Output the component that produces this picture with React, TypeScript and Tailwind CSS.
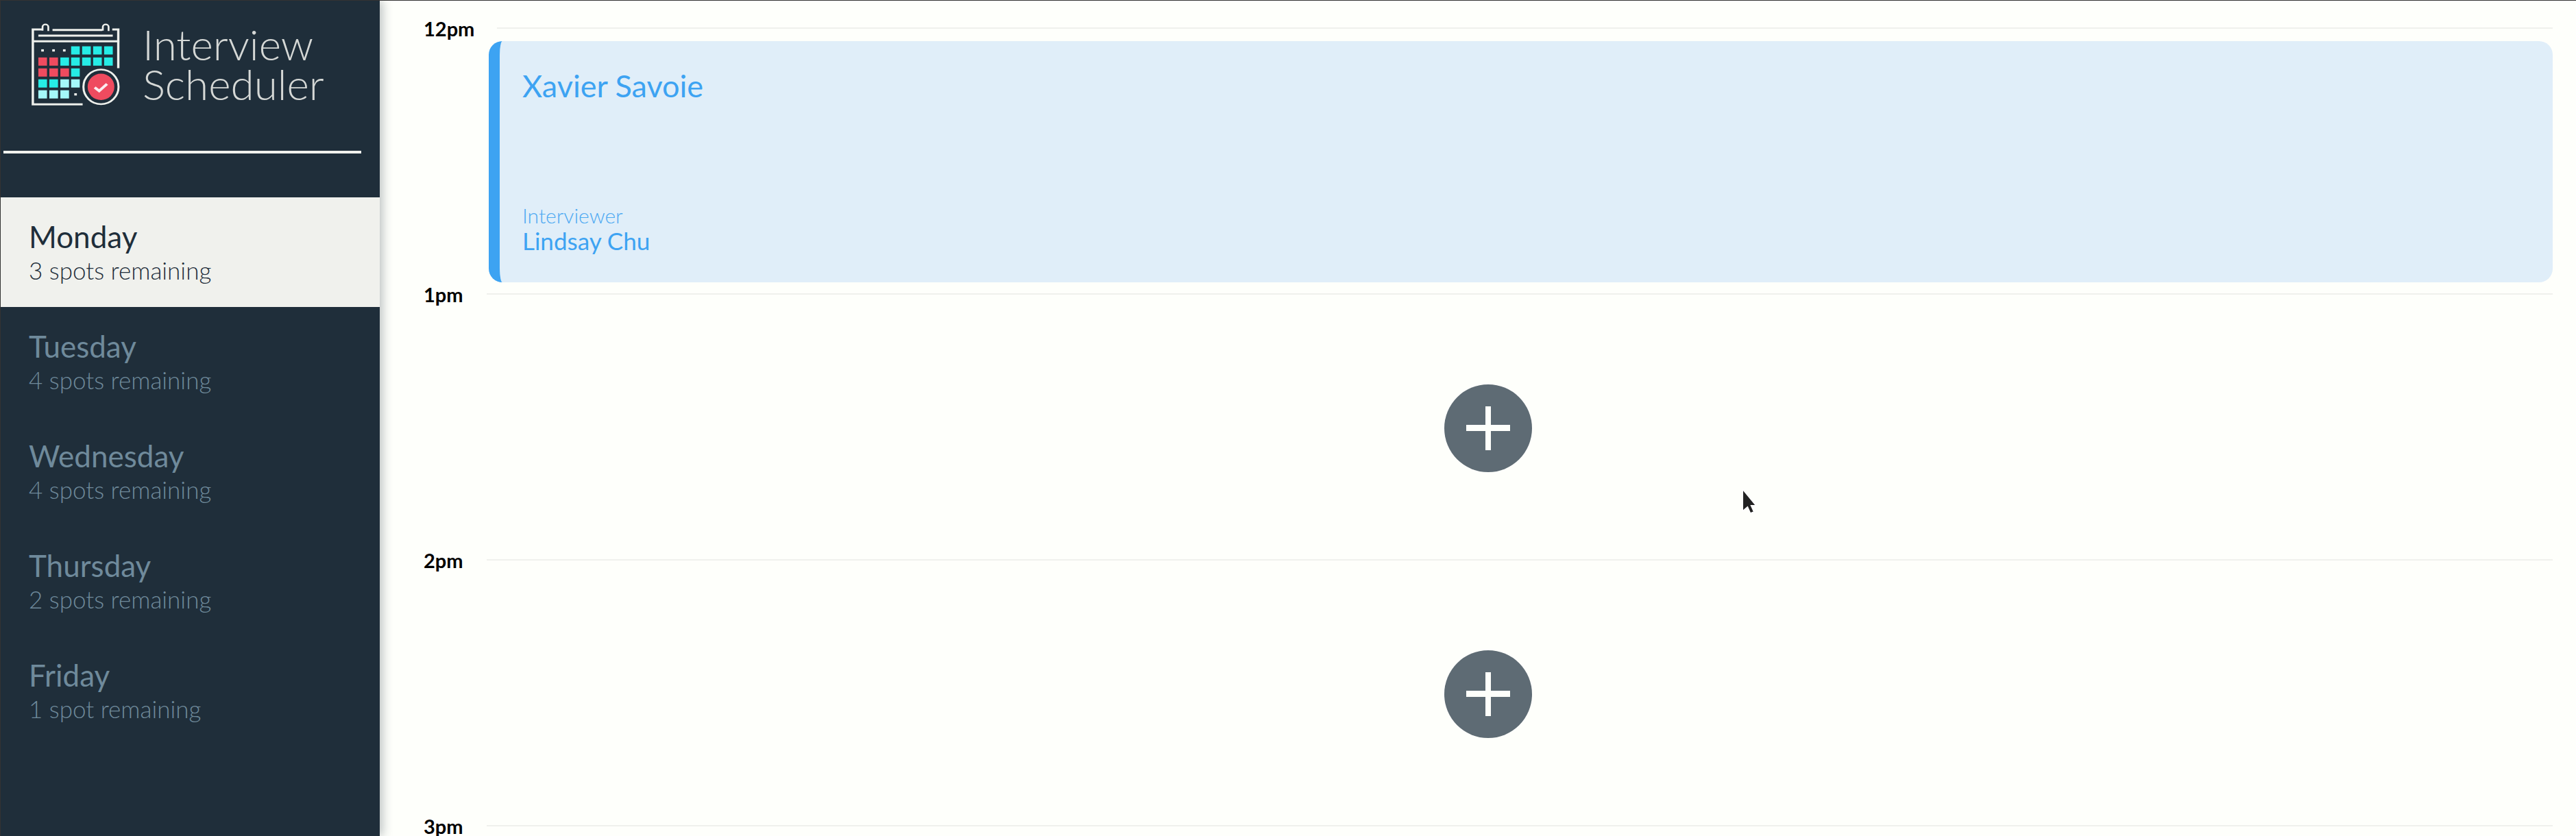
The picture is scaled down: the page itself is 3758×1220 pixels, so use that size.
const FONT = 'font-["Lato",sans-serif]';

const DAYS = [
  { name: 'Monday', spots: '3 spots remaining', selected: true },
  { name: 'Tuesday', spots: '4 spots remaining', selected: false },
  { name: 'Wednesday', spots: '4 spots remaining', selected: false },
  { name: 'Thursday', spots: '2 spots remaining', selected: false },
  { name: 'Friday', spots: '1 spot remaining', selected: false },
];

function Logo() {
  const teal = [
    [271, 197], [313, 197], [355, 197], [397, 197],
    [230, 246], [271, 246], [313, 246], [355, 246], [397, 246],
    [271, 294], [146, 342], [188, 342],
  ];
  const red = [[146, 246], [188, 246], [146, 294], [188, 294], [230, 294]];
  const light = [[230, 342], [271, 342], [146, 390], [188, 390], [230, 390]];
  const dots = [[162, 215], [204, 215], [245, 215], [288, 408]];

  return (
    <svg viewBox="120 90 340 370" preserveAspectRatio="none" className="w-[130px] h-[123px] shrink-0">
      <g fill="none" stroke="#eef0ec" strokeWidth="9">
        <path d="M160 123H125V452H315" />
        <path d="M125 175H455" />
        <path d="M428 123H451V293" />
        <path d="M200 125H390" />
        <path d="M146 150H430" />
        <path d="M162 128V112a11 11 0 0 1 22 0V130" strokeWidth="7" />
        <path d="M392 128V112a11 11 0 0 1 22 0V130" strokeWidth="7" />
        <ellipse cx="385" cy="375" rx="67" ry="76" strokeWidth="8" />
      </g>
      {teal.map(([x, y]) => <rect key={`t${x}-${y}`} x={x} y={y} width="33" height="36" fill="#26ece6" />)}
      {red.map(([x, y]) => <rect key={`r${x}-${y}`} x={x} y={y} width="33" height="36" fill="#ef4b5f" />)}
      {light.map(([x, y]) => <rect key={`l${x}-${y}`} x={x} y={y} width="33" height="36" fill="#a5f8fa" />)}
      {dots.map(([x, y]) => <rect key={`d${x}-${y}`} x={x - 5} y={y - 5} width="10" height="10" fill="#eef0ec" />)}
      <ellipse cx="385" cy="375" rx="51" ry="58" fill="#ef4b5f" />
      <path d="M361 378L378 393L408 362" fill="none" stroke="#fbeef0" strokeWidth="11" />
    </svg>
  );
}

function DayItem({ name, spots, selected }: { name: string; spots: string; selected: boolean }) {
  return (
    <li className={`h-[160px] pl-[41px] pt-[30px] ${selected ? 'bg-[#f0f1ed] text-[#1f2e3a]' : 'text-[#6f8a9b]'}`}>
      <h2 className="text-[44px] leading-[54px] font-normal">{name}</h2>
      <h3 className="text-[35px] leading-[44px] font-light">{spots}</h3>
    </li>
  );
}

function Sidebar() {
  return (
    <aside className="w-[553px] h-full shrink-0 bg-[#1f2e3a] shadow-[4px_0_14px_rgba(31,46,58,0.3)] z-10">
      <div className="flex items-start pl-[45px] pt-[31px] gap-[32px] h-[219px]">
        <Logo />
        <div className="text-[62px] leading-[58px] font-light text-[#d5d8d6] pt-[3px] whitespace-nowrap">
          Interview<br />Scheduler
        </div>
      </div>
      <hr className="ml-[4px] w-[522px] h-[4px] border-0 bg-[#f0f1ed]" />
      <ul className="mt-[64px]">
        {DAYS.map(day => <DayItem key={day.name} {...day} />)}
      </ul>
    </aside>
  );
}

function HourHeader({ time }: { time: string }) {
  return (
    <header className="flex items-center h-[32px] shrink-0 pl-[64px]">
      <span className="min-w-[59px] mr-[33px] text-[29px] font-bold text-black leading-none">{time}</span>
      <hr className="flex-1 h-[2px] border-0 bg-[#f0f1ed]" />
    </header>
  );
}

function AddButton() {
  return (
    <div className="flex-1 flex items-center justify-center pt-[4px] ml-[64px]">
      <button className="relative w-[128px] h-[128px] rounded-full bg-[#5e6b74]">
        <span className="absolute left-[32px] top-[59px] w-[64px] h-[9px] bg-[#fefffb]" />
        <span className="absolute left-[60px] top-[32px] w-[8px] h-[64px] bg-[#fefffb]" />
      </button>
    </div>
  );
}

function Booked() {
  return (
    <div className="ml-[159px] mt-[3px] h-[352px] rounded-[20px] border-l-[16px] border-[#3da3f2] bg-[#e0eef9] pl-[33px] pt-[37px] flex flex-col justify-between pb-[40px] text-[#3da3f2]">
      <h2 className="text-[45px] leading-[56px] font-normal">Xavier Savoie</h2>
      <div>
        <h4 className="text-[30px] leading-[31px] font-light opacity-90">Interviewer</h4>
        <h3 className="text-[35px] leading-[42px] font-normal">Lindsay Chu</h3>
      </div>
    </div>
  );
}

export default function App() {
  return (
    <main className={`relative flex h-[1220px] w-[3758px] overflow-hidden bg-[#fefffb] border-t-[1px] border-l-[1px] border-[#333333] ${FONT}`}>
      <Sidebar />
      <section className="flex-1 pr-[34px] pt-[24px]">
        <article className="h-[388px] flex flex-col">
          <HourHeader time="12pm" />
          <Booked />
        </article>
        <article className="h-[388px] flex flex-col">
          <HourHeader time="1pm" />
          <AddButton />
        </article>
        <article className="h-[388px] flex flex-col">
          <HourHeader time="2pm" />
          <AddButton />
        </article>
        <HourHeader time="3pm" />
      </section>
      <svg viewBox="0 0 20 37" className="absolute left-[2540px] top-[712px] w-[21px] h-[38px]">
        <path d="M1 1V32L8 26L12 35L17 33L13 24H20Z" fill="#222222" stroke="#ffffff" strokeWidth="1.5" />
      </svg>
    </main>
  );
}
